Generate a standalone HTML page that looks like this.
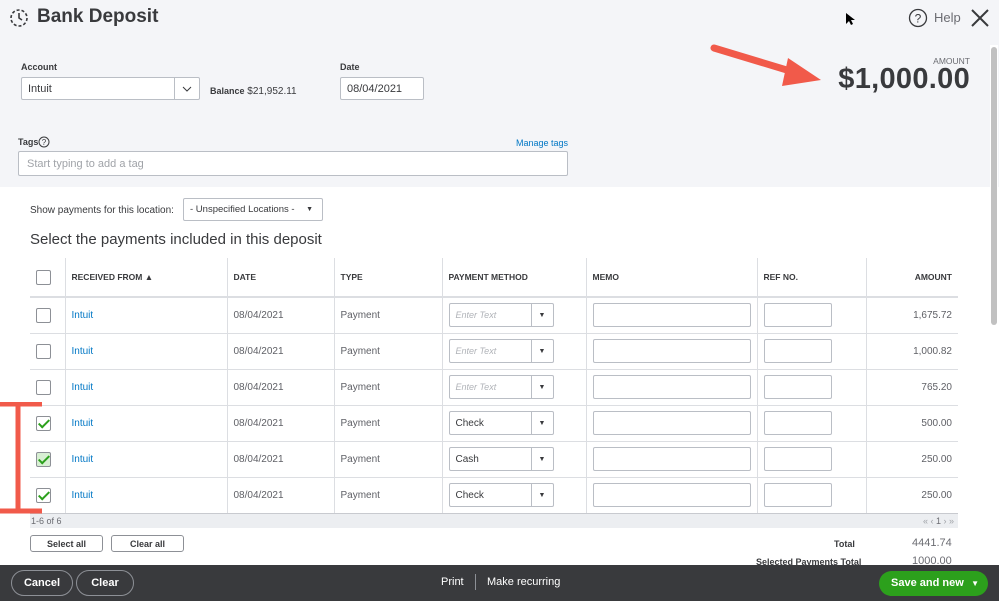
<!DOCTYPE html>
<html><head><style>
*{box-sizing:border-box;margin:0;padding:0}
body{width:999px;height:601px;overflow:hidden;position:relative;font-family:"Liberation Sans",sans-serif;background:#fff;color:#393a3d}
.a{position:absolute}
.hdr{left:0;top:0;width:999px;height:187px;background:#f4f5f8}
.inp{position:absolute;background:#fff;border:1px solid #babec5;border-radius:2px;font-size:11px;color:#393a3d;padding-left:6px;display:flex;align-items:center}
.lbl{font-size:9px;font-weight:bold;color:#393a3d}
table{position:absolute;left:30px;top:258px;width:928px;border-collapse:collapse;font-size:10px}
td,th{border-right:1px solid #dcdee2;border-bottom:1px solid #dcdee2;height:36px;padding:0 6px;text-align:left;color:#5f6066;font-weight:normal}
th{height:39px;font-size:8.5px;font-weight:bold;color:#393a3d;border-bottom:2px solid #dcdee2}
td:last-child,th:last-child{border-right:none;text-align:right}
.cb{width:15px;height:15px;border:1px solid #8d9096;border-radius:2px;background:#fff;display:inline-block;position:relative;vertical-align:middle}
.ck::after{content:"";position:absolute;left:4px;top:0px;width:4px;height:9px;border:solid #2ca01c;border-width:0 2px 2px 0;transform:rotate(45deg)}
.lnk{color:#0077c5}
.sel{display:inline-flex;width:105px;height:24px;border:1px solid #babec5;border-radius:2px;vertical-align:middle;align-items:center}
.sel span{flex:1;padding-left:6px;font-size:10px}
.sel b{width:22px;height:100%;border-left:1px solid #babec5;font-size:7px;display:flex;align-items:center;justify-content:center;color:#393a3d}
.box{display:inline-block;height:24px;border:1px solid #babec5;border-radius:2px;vertical-align:middle}
.btn{position:absolute;border:1px solid #8d9096;border-radius:3px;font-size:9px;font-weight:bold;display:flex;align-items:center;justify-content:center;background:#fff}
.foot{left:0;top:565px;width:999px;height:36px;background:#393a3d}
.fb{position:absolute;top:570px;height:26px;border:1px solid #8d9096;border-radius:14px;color:#fff;font-weight:bold;font-size:11px;display:flex;align-items:center;justify-content:center}
</style></head><body>
<div class="a hdr"></div>
<svg class="a" style="left:8px;top:7px" width="22" height="22" viewBox="0 0 22 22"><circle cx="11" cy="11" r="8" fill="none" stroke="#393a3d" stroke-width="1.6" stroke-dasharray="3 2"/><path d="M11 6v5l3 2" fill="none" stroke="#393a3d" stroke-width="1.6"/></svg>
<div class="a" style="left:37px;top:6px;font-size:19px;font-weight:bold;color:#393a3d">Bank Deposit</div>
<svg class="a" style="left:845px;top:12px" width="10" height="14"><path d="M1 1v11l3-3 2 4 2-1-2-4h4z" fill="#000"/></svg>
<svg class="a" style="left:908px;top:8px" width="20" height="20"><circle cx="10" cy="10" r="8.5" fill="none" stroke="#393a3d" stroke-width="1.3"/><text x="10" y="14.5" font-size="12" text-anchor="middle" fill="#393a3d" font-family="Liberation Sans">?</text></svg>
<div class="a" style="left:934px;top:10px;font-size:13px;color:#6b6c72">Help</div>
<svg class="a" style="left:970px;top:8px" width="20" height="20"><path d="M2 2L18 18M18 2L2 18" stroke="#393a3d" stroke-width="2"/></svg>
<div class="a" style="left:990px;top:45px;width:8px;height:280px;background:#fff"></div>
<div class="a" style="left:991px;top:47px;width:6px;height:278px;background:#c1c1c1;border-radius:3px"></div>

<div class="a lbl" style="left:21px;top:62px">Account</div>
<div class="inp" style="left:21px;top:77px;width:179px;height:23px">Intuit<span style="position:absolute;right:0;top:0;width:25px;height:21px;border-left:1px solid #babec5;display:flex;align-items:center;justify-content:center"><svg width="10" height="6"><path d="M1 1l4 4 4-4" fill="none" stroke="#393a3d"/></svg></span></div>
<div class="a" style="left:210px;top:86px;font-size:10px"><b style="font-size:9px">Balance</b> $21,952.11</div>
<div class="a lbl" style="left:340px;top:62px">Date</div>
<div class="inp" style="left:340px;top:77px;width:84px;height:23px">08/04/2021</div>
<div class="a" style="right:29px;top:56px;font-size:8.5px;color:#6b6c72">AMOUNT</div>
<div class="a" style="right:29px;top:63px;font-size:29px;font-weight:bold;color:#393a3d;letter-spacing:0.3px">$1,000.00</div>
<svg class="a" style="left:700px;top:38px" width="130" height="50"><path d="M14 10L100 36" stroke="#f15a4a" stroke-width="7" stroke-linecap="round"/><path d="M88 20L121 42 82 48z" fill="#f15a4a"/></svg>

<div class="a lbl" style="left:18px;top:137px">Tags</div>
<svg class="a" style="left:38px;top:136px" width="12" height="12"><circle cx="6" cy="6" r="5" fill="none" stroke="#393a3d"/><text x="6" y="9" font-size="8" text-anchor="middle" fill="#393a3d" font-family="Liberation Sans">?</text></svg>
<div class="a" style="left:516px;top:138px;font-size:9px;color:#0077c5">Manage tags</div>
<div class="inp" style="left:18px;top:151px;width:550px;height:25px;color:#a0a3a8;padding-left:8px">Start typing to add a tag</div>

<div class="a" style="left:30px;top:205px;font-size:10px">Show payments for this location:</div>
<div class="inp" style="left:183px;top:198px;width:140px;height:23px;font-size:9.5px">- Unspecified Locations -<span style="position:absolute;right:9px;font-size:7px">▼</span></div>
<div class="a" style="left:30px;top:231px;font-size:15px;color:#393a3d">Select the payments included in this deposit</div>

<table>
<tr><th style="width:35px"><span class="cb"></span></th><th style="width:162px">RECEIVED FROM ▲</th><th style="width:107px">DATE</th><th style="width:108px">TYPE</th><th style="width:144px">PAYMENT METHOD</th><th style="width:170px">MEMO</th><th style="width:109px">REF NO.</th><th>AMOUNT</th></tr>
<tr><td><span class="cb"></span></td><td class="lnk">Intuit</td><td>08/04/2021</td><td>Payment</td><td><span class="sel"><span style="color:#b0b3b8;font-style:italic;font-size:9px">Enter Text</span><b>▼</b></span></td><td><span class="box" style="width:158px"></span></td><td><span class="box" style="width:68px"></span></td><td>1,675.72</td></tr>
<tr><td><span class="cb"></span></td><td class="lnk">Intuit</td><td>08/04/2021</td><td>Payment</td><td><span class="sel"><span style="color:#b0b3b8;font-style:italic;font-size:9px">Enter Text</span><b>▼</b></span></td><td><span class="box" style="width:158px"></span></td><td><span class="box" style="width:68px"></span></td><td>1,000.82</td></tr>
<tr><td><span class="cb"></span></td><td class="lnk">Intuit</td><td>08/04/2021</td><td>Payment</td><td><span class="sel"><span style="color:#b0b3b8;font-style:italic;font-size:9px">Enter Text</span><b>▼</b></span></td><td><span class="box" style="width:158px"></span></td><td><span class="box" style="width:68px"></span></td><td>765.20</td></tr>
<tr><td><span class="cb ck"></span></td><td class="lnk">Intuit</td><td>08/04/2021</td><td>Payment</td><td><span class="sel"><span style="color:#393a3d">Check</span><b>▼</b></span></td><td><span class="box" style="width:158px"></span></td><td><span class="box" style="width:68px"></span></td><td>500.00</td></tr>
<tr><td><span class="cb ck" style="background:#d8efd3"></span></td><td class="lnk">Intuit</td><td>08/04/2021</td><td>Payment</td><td><span class="sel"><span style="color:#393a3d">Cash</span><b>▼</b></span></td><td><span class="box" style="width:158px"></span></td><td><span class="box" style="width:68px"></span></td><td>250.00</td></tr>
<tr><td><span class="cb ck"></span></td><td class="lnk">Intuit</td><td>08/04/2021</td><td>Payment</td><td><span class="sel"><span style="color:#393a3d">Check</span><b>▼</b></span></td><td><span class="box" style="width:158px"></span></td><td><span class="box" style="width:68px"></span></td><td>250.00</td></tr>
</table>
<div class="a" style="left:30px;top:513px;width:928px;height:15px;background:#eceef1;border-top:1px solid #c8cacf;font-size:9px;color:#6b6c72;padding-left:1px;line-height:14px">1-6 of 6<span style="position:absolute;right:4px;color:#a0a3a8">« ‹ <span style="color:#6b6c72">1</span> › »</span></div>
<svg class="a" style="left:0;top:402px" width="45" height="112"><path d="M0 2H42M0 109H42M18 2V109" stroke="#f15a4a" stroke-width="5"/></svg>
<div class="btn" style="left:30px;top:535px;width:73px;height:17px">Select all</div>
<div class="btn" style="left:111px;top:535px;width:73px;height:17px">Clear all</div>
<div class="a" style="left:834px;top:539px;font-size:9px;font-weight:bold">Total</div>
<div class="a" style="left:912px;top:537px;font-size:11px;color:#6b6c72">4441.74</div>
<div class="a" style="left:756px;top:557px;font-size:9px;font-weight:bold">Selected Payments Total</div>
<div class="a" style="left:912px;top:555px;font-size:11px;color:#6b6c72">1000.00</div>

<div class="a foot"></div>
<div class="fb" style="left:11px;width:62px">Cancel</div>
<div class="fb" style="left:76px;width:58px">Clear</div>
<div class="a" style="left:441px;top:576px;font-size:11px;color:#fff">Print</div>
<div class="a" style="left:475px;top:574px;width:1px;height:16px;background:#8d9096"></div>
<div class="a" style="left:487px;top:576px;font-size:11px;color:#fff">Make recurring</div>
<div class="a" style="left:879px;top:571px;width:109px;height:25px;background:#2ca01c;border-radius:13px;color:#fff;font-size:11px;font-weight:bold;line-height:25px;padding-left:12px">Save and new<span style="position:absolute;right:9px;font-size:8px">▼</span></div>
</body></html>
